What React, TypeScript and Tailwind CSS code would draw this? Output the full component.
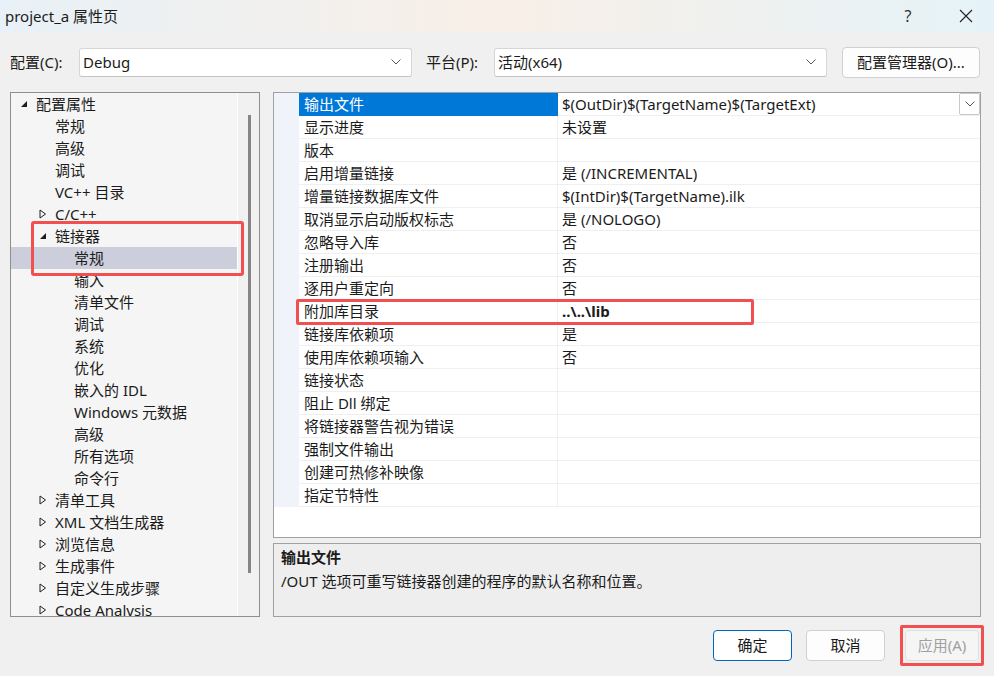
import React from "react";

const treeItems: { label: string; level: number; arrow?: "open" | "closed" }[] = [
  { label: "配置属性", level: 0, arrow: "open" },
  { label: "常规", level: 1 },
  { label: "高级", level: 1 },
  { label: "调试", level: 1 },
  { label: "VC++ 目录", level: 1 },
  { label: "C/C++", level: 1, arrow: "closed" },
  { label: "链接器", level: 1, arrow: "open" },
  { label: "常规", level: 2 },
  { label: "输入", level: 2 },
  { label: "清单文件", level: 2 },
  { label: "调试", level: 2 },
  { label: "系统", level: 2 },
  { label: "优化", level: 2 },
  { label: "嵌入的 IDL", level: 2 },
  { label: "Windows 元数据", level: 2 },
  { label: "高级", level: 2 },
  { label: "所有选项", level: 2 },
  { label: "命令行", level: 2 },
  { label: "清单工具", level: 1, arrow: "closed" },
  { label: "XML 文档生成器", level: 1, arrow: "closed" },
  { label: "浏览信息", level: 1, arrow: "closed" },
  { label: "生成事件", level: 1, arrow: "closed" },
  { label: "自定义生成步骤", level: 1, arrow: "closed" },
  { label: "Code Analysis", level: 1, arrow: "closed" },
];

const props: [string, string][] = [
  ["输出文件", "$(OutDir)$(TargetName)$(TargetExt)"],
  ["显示进度", "未设置"],
  ["版本", ""],
  ["启用增量链接", "是 (/INCREMENTAL)"],
  ["增量链接数据库文件", "$(IntDir)$(TargetName).ilk"],
  ["取消显示启动版权标志", "是 (/NOLOGO)"],
  ["忽略导入库", "否"],
  ["注册输出", "否"],
  ["逐用户重定向", "否"],
  ["附加库目录", "..\\..\\lib"],
  ["链接库依赖项", "是"],
  ["使用库依赖项输入", "否"],
  ["链接状态", ""],
  ["阻止 Dll 绑定", ""],
  ["将链接器警告视为错误", ""],
  ["强制文件输出", ""],
  ["创建可热修补映像", ""],
  ["指定节特性", ""],
];

const indent = ["pl-[9px]", "pl-[28px]", "pl-[47px]"];

function Chevron() {
  return (
    <svg width="10" height="6" viewBox="0 0 10 6" fill="none">
      <path d="M0.5 0.5 L5 5 L9.5 0.5" stroke="#555" strokeWidth="1" />
    </svg>
  );
}

function Arrow({ kind }: { kind?: "open" | "closed" }) {
  if (kind === "open")
    return (
      <svg width="8" height="8" viewBox="0 0 8 8">
        <polygon points="7,1 7,7 1,7" fill="#1e1e1e" />
      </svg>
    );
  if (kind === "closed")
    return (
      <svg width="8" height="10" viewBox="0 0 8 10">
        <polygon points="1,1 6.5,5 1,9" fill="none" stroke="#1e1e1e" strokeWidth="1" />
      </svg>
    );
  return null;
}

function Combo({ value, width }: { value: string; width: string }) {
  return (
    <div
      className={`${width} h-[29px] bg-white border border-[#d6d6d6] border-b-[#c4c4c4] rounded-[3px] flex items-center justify-between pl-[3px] pr-[10px]`}
    >
      <span>{value}</span>
      <Chevron />
    </div>
  );
}

export default function App() {
  return (
    <div className="w-[994px] h-[676px] bg-[#f0f0f0] text-[15px] leading-none text-[#1b1b1b] font-['Noto_Sans','Noto_Sans_CJK_SC',sans-serif] overflow-hidden">
      {/* title bar */}
      <div className="h-[32px] flex items-center justify-between pl-[5px] bg-gradient-to-r from-[#e8f1f7] via-[#f8efe7] to-[#e5f3f8]">
        <span>project_a 属性页</span>
        <div className="flex items-center h-full">
          <span className="w-[60px] text-center text-[16px] text-[#333]">?</span>
          <div className="w-[56px] flex justify-center">
            <svg width="14" height="14" viewBox="0 0 14 14">
              <path d="M1 1 L13 13 M13 1 L1 13" stroke="#222" strokeWidth="1.1" />
            </svg>
          </div>
        </div>
      </div>

      {/* config row */}
      <div className="h-[60px] flex items-center pl-[10px]">
        <span className="w-[69px]">配置(C):</span>
        <Combo value="Debug" width="w-[333px]" />
        <span className="ml-[14px] w-[68px]">平台(P):</span>
        <Combo value="活动(x64)" width="w-[333px]" />
        <button className="ml-[15px] w-[138px] h-[31px] bg-[#fdfdfd] border border-[#d0d0d0] rounded-[4px] flex items-center justify-center">
          配置管理器(O)...
        </button>
      </div>

      {/* main area */}
      <div className="flex pl-[10px]">
        {/* tree */}
        <div className="relative w-[250px] h-[525px] border border-[#8e8e8e] bg-[#f5f5f5] flex overflow-hidden">
          <div className="w-[226px] flex flex-col">
            {treeItems.map((it, i) => (
              <div
                key={i}
                className={`h-[22px] shrink-0 flex items-center whitespace-nowrap ${indent[it.level]} ${i === 7 ? "bg-[#cccedb]" : ""}`}
              >
                <span className="w-[16px] flex items-center">
                  <Arrow kind={it.arrow} />
                </span>
                <span>{it.label}</span>
              </div>
            ))}
          </div>
          <div className="w-[1px] bg-white" />
          <div className="flex-1 bg-[#f1f1f1] flex justify-center pt-[22px] pl-[1px]">
            <div className="w-[3px] h-[458px] bg-[#868686]" />
          </div>
          <div className="absolute left-[20px] top-[128px] w-[213px] h-[55px] border-[3px] border-[#f25050] rounded-[3px]" />
        </div>

        {/* right side */}
        <div className="ml-[13px] w-[708px] flex flex-col">
          <div className="relative h-[446px] border border-[#a0a0a0] bg-white">
            {props.map(([name, value], i) => (
              <div key={i} className="h-[23px] flex">
                <div className="w-[25px] bg-[#f0f4fa]" />
                <div
                  className={`w-[259px] flex items-center pl-[5px] border-r border-b ${
                    i === 0 ? "bg-[#0078d7] text-white border-[#0078d7] border-b-[#0078d7]" : "border-[#efefef]"
                  }`}
                >
                  {name}
                </div>
                <div className="flex-1 flex items-center justify-between pl-[4px] border-b border-[#efefef]">
                  <span className={i === 9 ? "font-bold" : ""}>{value}</span>
                  {i === 0 && (
                    <div className="w-[21px] h-[22px] border border-[#c8c8c8] rounded-[2px] bg-white flex items-center justify-center">
                      <Chevron />
                    </div>
                  )}
                </div>
              </div>
            ))}
            <div className="absolute left-[22px] top-[206px] w-[458px] h-[26px] border-[3px] border-[#f25050] rounded-[2px]" />
          </div>
          <div className="mt-[5px] h-[74px] border border-[#a0a0a0] bg-[#eeeeee] px-[7px] pt-[6px] flex flex-col gap-[9px]">
            <span className="font-bold">输出文件</span>
            <span>/OUT 选项可重写链接器创建的程序的默认名称和位置。</span>
          </div>
        </div>
      </div>

      {/* buttons */}
      <div className="flex justify-end items-center pr-[10px] mt-[8px]">
        <button className="w-[79px] h-[31px] bg-white border border-[#0067c0] rounded-[4px]">确定</button>
        <button className="ml-[14px] w-[79px] h-[31px] bg-[#fdfdfd] border border-[#d0d0d0] rounded-[4px]">取消</button>
        <div className="ml-[15px] p-[2px] border-[3px] border-[#f25050] rounded-[2px]">
          <button className="w-[74px] h-[31px] bg-[#f5f5f5] border border-[#e0e0e0] rounded-[4px] text-[#a0a0a0]">
            应用(A)
          </button>
        </div>
      </div>
    </div>
  );
}
